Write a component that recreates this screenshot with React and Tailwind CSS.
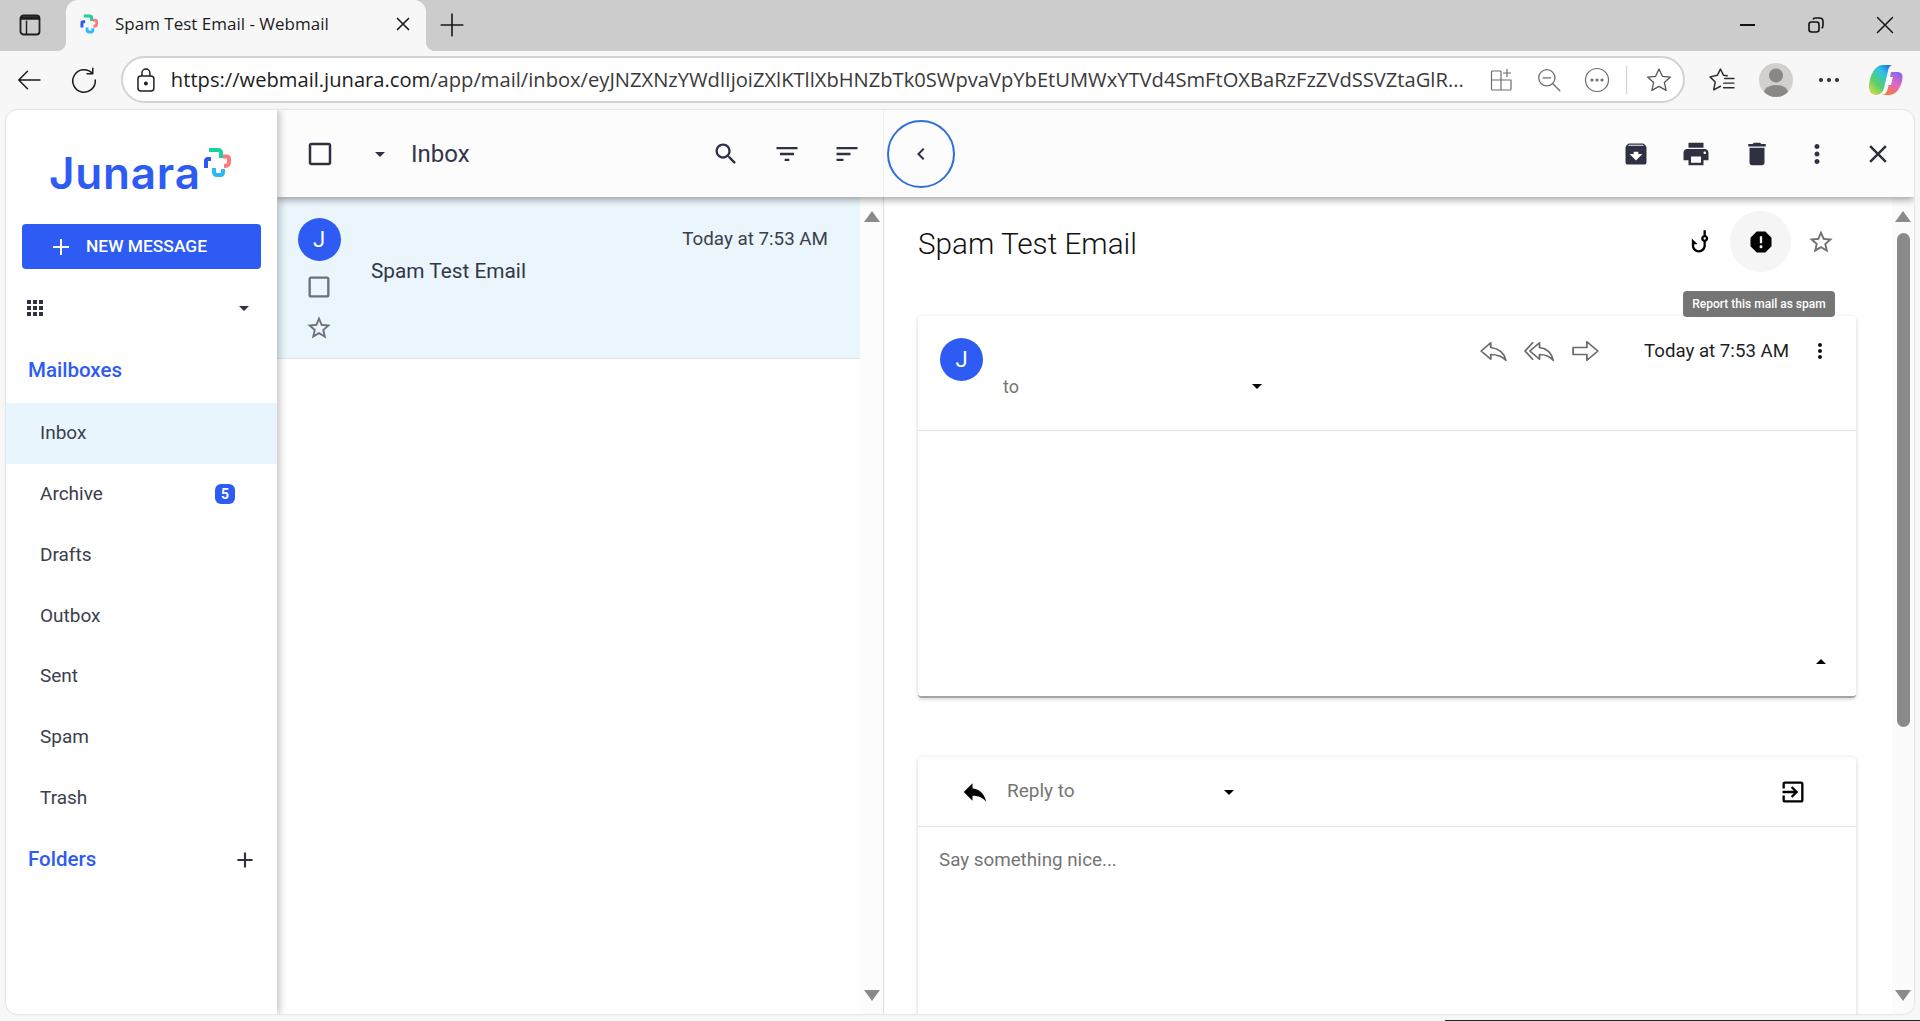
import React from "react";

const P = {
  box: "M19 5v14H5V5h14m0-2H5c-1.1 0-2 .9-2 2v14c0 1.1.9 2 2 2h14c1.1 0 2-.9 2-2V5c0-1.1-.9-2-2-2z",
  drop: "M7 10l5 5 5-5z",
  dropUp: "M7 14l5-5 5 5z",
  search: "M15.5 14h-.79l-.28-.27C15.41 12.59 16 11.11 16 9.5 16 5.91 13.09 3 9.5 3S3 5.91 3 9.5 5.91 16 9.5 16c1.61 0 3.09-.59 4.23-1.57l.27.28v.79l5 4.99L20.49 19l-4.99-5zm-6 0C7.01 14 5 11.99 5 9.5S7.01 5 9.5 5 14 7.01 14 9.5 11.99 14 9.5 14z",
  filter: "M10 18h4v-2h-4v2zM3 6v2h18V6H3zm3 7h12v-2H6v2z",
  sort: "M3 18h6v-2H3v2zM3 6v2h18V6H3zm0 7h12v-2H3v2z",
  chevron: "M15.41 7.41L14 6l-6 6 6 6 1.41-1.41L10.83 12z",
  archive: "M20.54 5.23l-1.39-1.68C18.88 3.21 18.47 3 18 3H6c-.47 0-.88.21-1.16.55L3.46 5.23C3.17 5.57 3 6.02 3 6.5V19c0 1.1.9 2 2 2h14c1.1 0 2-.9 2-2V6.5c0-.48-.17-.93-.46-1.27zM12 17.5L6.5 12H10v-2h4v2h3.5L12 17.5zM5.12 5l.81-1h12l.94 1H5.12z",
  print: "M19 8H5c-1.66 0-3 1.34-3 3v6h4v4h12v-4h4v-6c0-1.66-1.34-3-3-3zm-3 11H8v-5h8v5zm3-7c-.55 0-1-.45-1-1s.45-1 1-1 1 .45 1 1-.45 1-1 1zm-1-9H6v4h12V3z",
  del: "M6 19c0 1.1.9 2 2 2h8c1.1 0 2-.9 2-2V7H6v12zM19 4h-3.5l-1-1h-5l-1 1H5v2h14V4z",
  more: "M12 8c1.1 0 2-.9 2-2s-.9-2-2-2-2 .9-2 2 .9 2 2 2zm0 2c-1.1 0-2 .9-2 2s.9 2 2 2 2-.9 2-2-.9-2-2-2zm0 6c-1.1 0-2 .9-2 2s.9 2 2 2 2-.9 2-2-.9-2-2-2z",
  close: "M19 6.41L17.59 5 12 10.59 6.41 5 5 6.41 10.59 12 5 17.59 6.41 19 12 13.41 17.59 19 19 17.59 13.41 12z",
  report: "M15.73 3H8.27L3 8.27v7.46L8.27 21h7.46L21 15.73V8.27L15.73 3zM12 17.3c-.72 0-1.3-.58-1.3-1.3 0-.72.58-1.3 1.3-1.3.72 0 1.3.58 1.3 1.3 0 .72-.58 1.3-1.3 1.3zm1-4.3h-2V7h2v6z",
  star: "M22 9.24l-7.19-.62L12 2 9.19 8.63 2 9.24l5.46 4.73L5.82 21 12 17.27 18.18 21l-1.63-7.03L22 9.24zM12 15.4l-3.76 2.27 1-4.28-3.32-2.88 4.38-.38L12 6.1l1.71 4.04 4.38.38-3.32 2.88 1 4.28L12 15.4z",
  hook: "M19 9c0-1.3-.84-2.4-2-2.82V2h-2v4.18C13.84 6.6 13 7.7 13 9s.84 2.4 2 2.82V15c0 2.21-1.79 4-4 4s-4-1.79-4-4v-1h3L5 9v6c0 3.31 2.69 6 6 6s6-2.69 6-6v-3.18C18.16 11.4 19 10.3 19 9zm-3 1c-.55 0-1-.45-1-1s.45-1 1-1 1 .45 1 1-.45 1-1 1z",
  apps: "M4 8h4V4H4v4zm6 12h4v-4h-4v4zm-6 0h4v-4H4v4zm0-6h4v-4H4v4zm6 0h4v-4h-4v4zm6-10v4h4V4h-4zm-6 4h4V4h-4v4zm6 6h4v-4h-4v4zm0 6h4v-4h-4v4z",
  add: "M19 13h-6v6h-2v-6H5v-2h6V5h2v6h6v2z",
  reply: "M10 9V5l-7 7 7 7v-4.1c5 0 8.5 1.6 11 5.1-1-5-4-10-11-11z",
  exit: "M10.09 15.59L11.5 17l5-5-5-5-1.41 1.41L12.67 11H3v2h9.67l-2.58 2.59zM19 3H5c-1.11 0-2 .9-2 2v4h2V5h14v14H5v-4H3v4c0 1.1.89 2 2 2h14c1.1 0 2-.9 2-2V5c0-1.1-.9-2-2-2z",
};

function I({ d, size = 30, slot, color = "#2f3142", className = "" }) {
  return (
    <span className={`flex shrink-0 items-center justify-center ${slot || "w-[30px] h-[30px]"} ${className}`}>
      <svg width={size} height={size} viewBox="0 0 24 24" fill={color}><path d={d} /></svg>
    </span>
  );
}

function Stroke({ children, size = 24, height, w = 1.4, color = "#2b2b2b", vb = "0 0 24 24", stretch }) {
  return (
    <svg width={size} height={height || size} viewBox={vb} preserveAspectRatio={stretch ? "none" : undefined} fill="none" stroke={color} strokeWidth={w} strokeLinecap="round" strokeLinejoin="round">
      {children}
    </svg>
  );
}

function Cross({ width, height, className = "", sw = 4 }) {
  return (
    <svg className={className} width={width} height={height} viewBox="0 0 28 29" fill="none" strokeWidth={sw}>
      <path d="M6 2H15Q18 2 18 5V10" stroke="#1ccfa0" />
      <path d="M20 8.5H23.5Q26 8.5 26 11V14Q26 18 21 18" stroke="#fb7a7a" />
      <path d="M11 20V24Q11 27 14 27H17.5Q20 27 20 24V21" stroke="#2fb8f5" />
      <path d="M3 20V13Q3 11 5 11H8" stroke="#2b58f5" />
    </svg>
  );
}

function TabBar() {
  return (
    <div className="flex h-[51px] items-stretch bg-[#cccccc] [font-family:'Open_Sans',sans-serif]">
      <div className="flex w-[66px] items-center justify-center pb-[2px] pr-[6px]">
        <svg width="22" height="22" viewBox="0 0 22 22" fill="none" stroke="#1f1f1f" strokeWidth="1.8">
          <rect x="1.5" y="1.5" width="19" height="19" rx="3" />
          <path d="M7.5 6.5v14" strokeWidth="1.4" />
          <path d="M2 4h18" strokeWidth="3.5" />
        </svg>
      </div>
      <div className="relative flex w-[360px] items-center rounded-t-[12px] bg-[#f7f7f7] pb-[3px] pl-[14px] pr-[12px]">
        <span className="absolute bottom-0 left-[-8px] h-[8px] w-[8px] bg-[radial-gradient(circle_at_0_0,#cccccc_7.5px,#f7f7f7_8px)]" />
        <span className="absolute bottom-0 right-[-8px] h-[8px] w-[8px] bg-[radial-gradient(circle_at_100%_0,#cccccc_7.5px,#f7f7f7_8px)]" />
        <Cross width={18} height={20} sw={4.5} />
        <span className="ml-[17px] flex-1 whitespace-nowrap text-[17px] text-[#1c1c1c]">Spam Test Email - Webmail</span>
        <Stroke size={22} w={1.8} color="#1a1a1a"><path d="M6 6l12 12M18 6L6 18" /></Stroke>
      </div>
      <div className="flex w-[52px] items-center justify-center pb-[2px]">
        <Stroke size={26} w={1.5} color="#1a1a1a"><path d="M12 2v20M2 12h20" /></Stroke>
      </div>
      <div className="flex flex-1 items-center justify-end pb-[2px] pr-[25px]">
        <div className="flex items-center">
          <div className="h-[2px] w-[15px] bg-[#111]" />
          <svg className="ml-[53px]" width="16" height="16" viewBox="0 0 16 16" fill="none" stroke="#111" strokeWidth="1.6">
            <rect x="1" y="5" width="10" height="10" rx="2.5" />
            <path d="M5 2.5 Q5.5 1 7.5 1H11.5Q15 1 15 4.5V8.5Q15 10.5 13.5 11" />
          </svg>
          <span className="ml-[51px]"><Stroke size={20} w={1.7} color="#111"><path d="M3 3l18 18M21 3L3 21" /></Stroke></span>
        </div>
      </div>
    </div>
  );
}

function NavBar() {
  return (
    <div className="flex h-[59px] items-center bg-[#f7f7f7] pb-[2px] [font-family:'Open_Sans',sans-serif]">
      <div className="flex w-[60px] justify-center">
        <Stroke size={30} w={1.2} color="#1a1a1a"><path d="M20 12H3M10 5l-7 7 7 7" /></Stroke>
      </div>
      <div className="flex w-[48px] justify-center">
        <Stroke size={30} w={1.2} color="#1a1a1a"><path d="M18.5 6.5A9 9 0 1 0 21 12M19 2.5v4.5h-4.5" /></Stroke>
      </div>
      <div className="ml-[13px] flex h-[47px] w-[1564px] items-center rounded-full border-2 border-[#d2d2d2] bg-white pl-[11px]">
        <svg width="24" height="28" viewBox="0 0 24 28" fill="none" stroke="#1f1f1f" strokeWidth="1.5">
          <rect x="4" y="10" width="16" height="15" rx="3" />
          <path d="M8 10V7a4 4 0 0 1 8 0v3" />
          <circle cx="12" cy="17.5" r="1.2" fill="#1f1f1f" />
        </svg>
        <div className="ml-[13px] w-[1310px] whitespace-nowrap text-[20.15px] text-[#3a3a3a]">
          <span className="text-[#1c1c1c]">https://webmail.junara.com</span>/app/mail/inbox/eyJNZXNzYWdlIjoiZXlKTllXbHNZbTk0SWpvaVpYbEtUMWxYTVd4SmFtOXBaRzFzZVdSSVZtaGlR...
        </div>
        <div className="ml-[4px] flex items-center">
          <span className="flex w-[48px] justify-center">
            <svg width="24" height="24" viewBox="0 0 24 24" fill="none" stroke="#6d6d6d" strokeWidth="1.2">
              <path d="M12 3H3.5a1 1 0 0 0-1 1v17a1 1 0 0 0 1 1H21a1 1 0 0 0 1-1V12H2.5M12 3v19M18 1v8M14 5h8" />
            </svg>
          </span>
          <span className="flex w-[48px] justify-center">
            <Stroke size={26} w={1.2} color="#6d6d6d"><circle cx="10" cy="10" r="7.5" /><path d="M15.5 15.5L22 22M6.5 10h7" /></Stroke>
          </span>
          <span className="flex w-[48px] justify-center">
            <svg width="26" height="26" viewBox="0 0 26 26" fill="none" stroke="#6d6d6d" strokeWidth="1.2">
              <circle cx="13" cy="13" r="11.5" />
              <circle cx="8" cy="13" r="1" fill="#6d6d6d" /><circle cx="13" cy="13" r="1" fill="#6d6d6d" /><circle cx="18" cy="13" r="1" fill="#6d6d6d" />
            </svg>
          </span>
          <span className="ml-[5px] h-[28px] w-px bg-[#cfcfcf]" />
          <span className="ml-[8px] flex w-[48px] justify-center">
            <Stroke size={28} w={1.1} color="#555"><path d="M12 2.5l2.9 6.3 6.9.7-5.2 4.6 1.5 6.8L12 17.5l-6.1 3.4 1.5-6.8-5.2-4.6 6.9-.7z" /></Stroke>
          </span>
        </div>
      </div>
      <div className="ml-[17px] flex w-[40px] justify-center">
        <svg width="26" height="24" viewBox="0 0 25 23" fill="none" stroke="#2b2b2b" strokeWidth="1.4" strokeLinejoin="round" strokeLinecap="round">
          <path d="M17.5 7.5L14 7L11 1L8 7L1 8.5L6 13.5L4.5 21L11 17.5" />
          <path d="M15 10H24M14 14.5H24M14 19H24" />
        </svg>
      </div>
      <div className="ml-[17px] flex h-[34px] w-[34px] items-center justify-center overflow-hidden rounded-full bg-[#d2d0ce]">
        <svg width="34" height="34" viewBox="0 0 34 34" fill="#8a8886"><circle cx="17" cy="12.5" r="7" /><ellipse cx="17" cy="30" rx="12" ry="8" /></svg>
      </div>
      <div className="ml-[22px] flex w-[28px] justify-center gap-[4px]">
        <span className="h-[4px] w-[4px] rounded-full bg-[#2b2b2b]" />
        <span className="h-[4px] w-[4px] rounded-full bg-[#2b2b2b]" />
        <span className="h-[4px] w-[4px] rounded-full bg-[#2b2b2b]" />
      </div>
      <div className="ml-[26px] flex w-[34px] justify-center">
        <svg width="34" height="32" viewBox="0 0 34 32">
          <defs>
            <linearGradient id="cpa" x1="0.9" y1="0" x2="0.1" y2="1">
              <stop offset="0" stopColor="#1f5fd8" /><stop offset=".3" stopColor="#2ec0ea" /><stop offset=".65" stopColor="#58cf6a" /><stop offset="1" stopColor="#e5d84e" />
            </linearGradient>
            <linearGradient id="cpb" x1="0.8" y1="0" x2="0.3" y2="1">
              <stop offset="0" stopColor="#8a63f0" /><stop offset=".5" stopColor="#e06ac0" /><stop offset="1" stopColor="#f9793a" />
            </linearGradient>
          </defs>
          <path d="M22 8H28C32 8 34 10 33.5 14C33 20 29 31 20 31H13C16 31 18 28 19 24Z" fill="url(#cpb)" />
          <path d="M14 1H24C21 1 20 3 19 7L15 24C14 28 11 31 7 31C2 31 0 27 0 23C0 14 5 1 14 1Z" fill="url(#cpa)" />
          <path d="M18.5 13H24L22 21H16.5Z" fill="#fdfdfd" />
        </svg>
      </div>
    </div>
  );
}

function Sidebar() {
  const items = ["Inbox", "Archive", "Drafts", "Outbox", "Sent", "Spam", "Trash"];
  return (
    <aside className="relative z-20 flex w-[271px] shrink-0 flex-col bg-white shadow-[3px_0_7px_rgba(0,0,0,0.22)]">
      <div className="flex h-[114px] items-start pl-[43px] pt-[43px]">
        <span className="[font-family:Inter,sans-serif] text-[44px] font-semibold leading-[40px] tracking-[0.8px] text-[#2d5bf3]">Junara</span>
        <Cross className="ml-[2px] mt-[-5px]" width={28} height={29} />
      </div>
      <div className="mx-[16px] flex h-[45px] items-center rounded-[4px] bg-[#2d5bf3] pl-[30px] text-white">
        <svg width="18" height="18" viewBox="0 0 18 18" stroke="#fff" strokeWidth="2"><path d="M9 1v16M1 9h16" /></svg>
        <span className="ml-[16px] text-[17.4px] font-medium leading-none">NEW MESSAGE</span>
      </div>
      <div className="flex h-[78px] items-center justify-between pl-[17px] pr-[21px]">
        <I d={P.apps} size={32} slot="w-[24px] h-[24px]" />
        <I d={P.drop} size={28} slot="w-[24px] h-[24px]" />
      </div>
      <div className="flex h-[56px] items-start pl-[22px] pt-[9px] text-[20.5px] font-medium leading-[28px] text-[#2d5bf3]">Mailboxes</div>
      {items.map((n, i) => (
        <div key={n} className={`flex h-[60.8px] items-center justify-between pl-[34px] pr-[42px] text-[19px] text-[#3c3e4d] ${i === 0 ? "bg-[#e9f5fd]" : ""}`}>
          <span>{n}</span>
          {n === "Archive" && (
            <span className="flex h-[20px] w-[20px] items-center justify-center rounded-[6px] bg-[#2d5bf3] text-[14px] font-bold text-white">5</span>
          )}
        </div>
      ))}
      <div className="flex h-[62px] items-center justify-between pl-[22px] pr-[17px] text-[20.5px] font-medium text-[#2d5bf3]">
        <span>Folders</span>
        <I d={P.add} size={26} />
      </div>
    </aside>
  );
}

function TopBar() {
  return (
    <div className="relative z-10 flex h-[87px] shrink-0 items-center bg-[#fcfcfc] shadow-[0_3px_7px_rgba(0,0,0,0.35)]">
      <div className="flex h-full w-[607px] shrink-0 items-center border-r border-[#f1f1f1] pl-[28px] pr-[21px]">
        <I d={P.box} size={30} />
        <I d={P.drop} size={24} slot="w-[24px] h-[24px]" className="ml-[33px]" />
        <span className="ml-[19px] flex-1 text-[24px] leading-none text-[#33354a]">Inbox</span>
        <I d={P.search} size={28} />
        <I d={P.filter} size={28} className="ml-[31px]" />
        <I d={P.sort} size={28} className="ml-[30px]" />
      </div>
      <div className="flex h-full flex-1 items-center pl-[3px] pr-[21px]">
        <div className="flex h-[68px] w-[68px] items-center justify-center rounded-full border-2 border-[#2f6fdd]">
          <I d={P.chevron} size={26} slot="w-[24px] h-[24px]" />
        </div>
        <div className="flex flex-1 items-center justify-end gap-[30.6px]">
          <I d={P.archive} size={28} />
          <I d={P.print} size={30} />
          <I d={P.del} size={30} />
          <I d={P.more} size={30} />
          <I d={P.close} size={30} />
        </div>
      </div>
    </div>
  );
}

function Tri({ up, color = "#8a8a8a" }) {
  return (
    <svg width="16" height="11" viewBox="0 0 16 11" fill={color}>
      <path d={up ? "M8 0l8 11H0z" : "M0 0h16L8 11z"} />
    </svg>
  );
}

function ListPane() {
  return (
    <div className="flex w-[607px] shrink-0 border-r border-[#dedede] bg-white">
      <div className="w-[583px]">
        <div className="flex h-[162px] border-b border-[#dfe3e6] bg-[#eaf5fc] pl-[20px] pr-[32px]">
          <div className="flex w-[44px] flex-col items-center pt-[21px]">
            <div className="flex h-[43px] w-[43px] items-center justify-center rounded-full bg-[#2d5bf3] text-[22px] text-white">J</div>
            <I d={P.box} size={28} color="#6e7076" className="mt-[11px]" />
            <I d={P.star} size={28} color="#6e7076" className="mt-[11px]" />
          </div>
          <div className="ml-[30px] flex-1 pt-[59px] text-[20.8px] leading-[30px] text-[#33354a]">Spam Test Email</div>
          <div className="pt-[30px] text-[18.8px] leading-[24px] text-[#3c3e4d]">Today at 7:53 AM</div>
        </div>
      </div>
      <div className="flex flex-1 flex-col items-center bg-[#fcfcfc] pb-[13px] pt-[14px]">
        <Tri up />
        <div className="mt-auto"><Tri /></div>
      </div>
    </div>
  );
}

function EmailCard() {
  const stroke = { size: 33, height: 28, w: 1.3, color: "#6b6b6b", stretch: true };
  return (
    <section className="flex h-[382px] flex-col rounded-[4px] border-b-2 border-[#a3a3a3] bg-white shadow-[0_1px_4px_rgba(0,0,0,0.18)]">
      <div className="flex h-[115px] shrink-0 border-b border-[#e2e2e2] pl-[22px] pr-[24px] pt-[22px]">
        <div className="flex h-[43px] w-[43px] shrink-0 items-center justify-center rounded-full bg-[#2d5bf3] text-[22px] text-white">J</div>
        <div className="ml-[20px] flex flex-1 flex-col">
          <div className="mt-[-3px] flex h-[32px] items-center justify-end">
            <span className="flex w-[46px] justify-center">
              <Stroke {...stroke}><path d="M10 9V5l-7 7 7 7v-4.1c5 0 8.5 1.6 11 5.1-1-5-4-10-11-11z" /></Stroke>
            </span>
            <span className="flex w-[46px] justify-center">
              <Stroke {...stroke}><path d="M12 9V5l-7 7 7 7v-4.1c5 0 7.5 1.6 10 5.1-1-5-3-10-10-11zM7 5l-5.5 7L7 19" /></Stroke>
            </span>
            <span className="flex w-[46px] justify-center">
              <Stroke {...stroke}><path d="M3 9h10V4l8 8-8 8v-5H3z" /></Stroke>
            </span>
            <span className="ml-[36px] w-[145px] whitespace-nowrap text-[18.7px] text-[#1f1f1f]">Today at 7:53 AM</span>
            <I d={P.more} size={32} color="#111" slot="w-[24px] h-[24px]" className="ml-[19px]" />
          </div>
          <div className="flex h-[38px] w-[266px] items-center justify-between text-[18px] text-[#757575]">
            <span>to</span>
            <I d={P.drop} size={28} color="#000" slot="w-[24px] h-[24px]" />
          </div>
        </div>
      </div>
      <div className="flex flex-1 items-end justify-end pb-[22px] pr-[23px]">
        <I d={P.dropUp} size={28} color="#000" slot="w-[24px] h-[24px]" />
      </div>
    </section>
  );
}

function ReplyCard() {
  return (
    <section className="mt-[59px] h-[270px] rounded-t-[4px] bg-white shadow-[0_1px_4px_rgba(0,0,0,0.18)]">
      <div className="flex h-[70px] items-center border-b border-[#e2e2e2] pl-[41px] pr-[49px]">
        <I d={P.reply} size={30} color="#000" slot="w-[32px] h-[32px]" />
        <span className="ml-[16px] w-[210px] text-[19px] text-[#757575]">Reply to</span>
        <I d={P.drop} size={28} color="#000" slot="w-[24px] h-[24px]" />
        <div className="flex-1" />
        <I d={P.exit} size={28} color="#000" slot="w-[28px] h-[28px]" />
      </div>
      <div className="pl-[21px] pt-[21px] text-[18.8px] leading-[24px] text-[#757575]">Say something nice...</div>
    </section>
  );
}

function ReadPane() {
  return (
    <div className="flex min-w-0 flex-1 overflow-hidden bg-white">
      <div className="h-[817px] flex-1 overflow-hidden pl-[34px] pr-[36px]">
        <div className="relative flex h-[119px] justify-between pr-[5px] pt-[14px]">
          <h1 className="pt-[16px] text-[29.7px] font-light leading-[34px] text-[#111]">Spam Test Email</h1>
          <div className="flex h-[61px] items-center">
            <I d={P.hook} size={28} color="#000" slot="w-[60px] h-[61px]" />
            <div className="flex h-[61px] w-[61px] items-center justify-center rounded-full bg-[#f5f5f5]">
              <I d={P.report} size={28} color="#000" />
            </div>
            <I d={P.star} size={28} color="#6e7076" slot="w-[60px] h-[61px]" />
          </div>
          <div className="absolute right-[21px] top-[94px] z-10 flex h-[26px] w-[152px] items-center justify-center rounded-[4px] bg-[#757575] text-[12px] font-medium text-white">
            Report this mail as spam
          </div>
        </div>
        <EmailCard />
        <ReplyCard />
      </div>
      <div className="flex w-[22px] shrink-0 flex-col items-center bg-[#fbfbfb] pb-[13px] pt-[14px]">
        <Tri up />
        <div className="mt-[11px] h-[494px] w-[13px] rounded-full bg-[#8a8a8a]" />
        <div className="mt-auto"><Tri /></div>
      </div>
    </div>
  );
}

export default function App() {
  return (
    <div className="flex h-[1021px] w-[1920px] flex-col overflow-hidden bg-[#f7f7f7] [font-family:Roboto,sans-serif]">
      <TabBar />
      <NavBar />
      <div className="mx-[6px] flex h-[904px] shrink-0 overflow-hidden rounded-[12px] bg-white shadow-[0_0_2px_rgba(0,0,0,0.25)]">
        <Sidebar />
        <div className="flex min-w-0 flex-1 flex-col">
          <TopBar />
          <div className="flex min-h-0 flex-1">
            <ListPane />
            <ReadPane />
          </div>
        </div>
      </div>
      <div className="flex flex-1 items-end justify-end">
        <div className="h-px w-[475px] bg-[#222]" />
      </div>
    </div>
  );
}
